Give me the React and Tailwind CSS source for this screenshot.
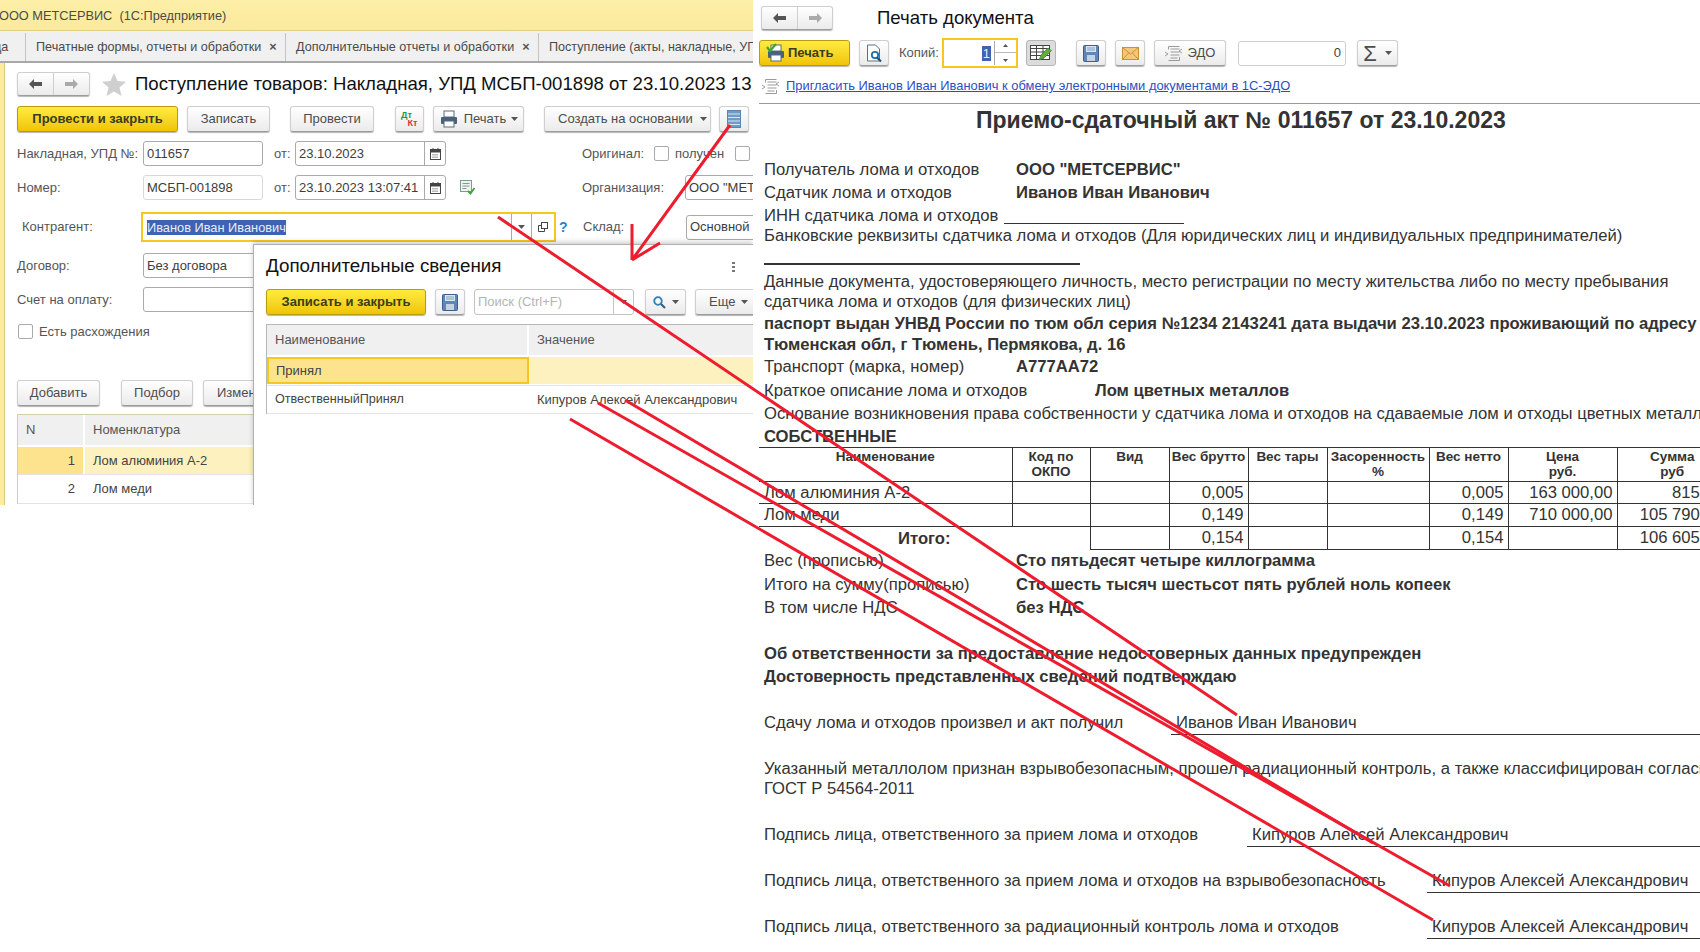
import React from "react";

const btn = "flex items-center justify-center h-[26px] rounded-[3px] border border-[#cfcfcf] border-b-[#9c9c9c] bg-linear-to-b from-white to-[#ebebeb] shadow-[0_1px_1px_#b5b5b5] text-[#4d4d4d] text-[13px] shrink-0 whitespace-nowrap";
const yellow = "flex items-center justify-center h-[26px] rounded-[3px] border border-[#b89b10] bg-linear-to-b from-[#ffec3d] to-[#f0c400] shadow-[0_1px_1px_#b5b5b5] text-[#3c3c1e] text-[13px] font-bold shrink-0 whitespace-nowrap";
const field = "flex items-center h-[25px] rounded-[3px] border border-[#aaa] bg-white text-[#3d3d3d] text-[13px] pl-[3px] shrink-0 whitespace-nowrap overflow-hidden";
const label = "text-[#555] text-[13px] whitespace-nowrap shrink-0";

const Caret = () => (
  <svg width="7" height="4" viewBox="0 0 7 4" className="shrink-0"><path d="M0 0h7L3.500 4z" fill="#555" /></svg>
);
const Back = ({ c = "#555" }) => (
  <svg width="15" height="12" viewBox="0 0 15 12"><path d="M1 6l5-5v3h8v4H6v3z" fill={c} /></svg>
);
const Fwd = ({ c = "#aaa" }) => (
  <svg width="15" height="12" viewBox="0 0 15 12"><path d="M14 6L9 1v3H1v4h8v3z" fill={c} /></svg>
);
const Calendar = () => (
  <svg width="11" height="12" viewBox="0 0 11 12">
    <rect x="0.500" y="1.500" width="10" height="10" fill="#fff" stroke="#444" />
    <rect x="0.500" y="1.500" width="10" height="3" fill="#444" />
    <path d="M3 0v3M8 0v3" stroke="#444" />
    <path d="M2.500 6.500h6M2.500 8h6M2.500 9.500h6" stroke="#777" strokeDasharray="1 1" />
  </svg>
);
const Printer = ({ check }) => (
  <svg width="20" height="20" viewBox="0 0 20 20">
    <rect x="5" y="2" width="10" height="6" fill="#fff" stroke="#5a6b80" />
    <rect x="2" y="8" width="16" height="7" rx="1" fill="#48617d" />
    <rect x="5" y="12" width="10" height="6" fill="#fff" stroke="#5a6b80" />
    {check && <path d="M1 4l3 4 6-7" fill="none" stroke="#3aa53a" strokeWidth="2.200" />}
  </svg>
);
const Floppy = () => (
  <svg width="16" height="17" viewBox="0 0 16 17">
    <rect x="0.500" y="0.500" width="15" height="16" rx="1" fill="#5f86b4" stroke="#3f5f88" />
    <rect x="3" y="1" width="10" height="6" fill="#d9e5f1" />
    <rect x="4" y="10" width="8" height="6" fill="#c3d3e4" />
    <path d="M4 3h8M4 5h8" stroke="#7f9fc3" />
  </svg>
);
const Mail = () => (
  <svg width="17" height="13" viewBox="0 0 17 13">
    <rect x="0.500" y="0.500" width="16" height="12" fill="#f6c779" stroke="#c89236" />
    <path d="M1 1l7.500 6L16 1M1 12l5.500-6M16 12l-5.500-6" fill="none" stroke="#c89236" />
  </svg>
);
const EdoIcon = () => (
  <svg width="17" height="15" viewBox="0 0 17 15" fill="none" stroke="#9a9a9a">
    <path d="M3.500 0.500h11M3.500 0.500v3M14.500 11v3.500h-11" />
    <path d="M5.500 3h9M5.500 6h9M5.500 9h9M5.500 12h7" />
    <path d="M0 6l3 2-3 2M17 3l-3 2 3 2" />
  </svg>
);
const Search = () => (
  <svg width="13" height="13" viewBox="0 0 13 13" fill="none">
    <circle cx="5" cy="5" r="3.800" stroke="#2f7fb8" strokeWidth="1.800" />
    <path d="M8 8l4 4" stroke="#2f5f88" strokeWidth="2.200" />
  </svg>
);
const DocList = () => (
  <svg width="14" height="18" viewBox="0 0 14 18">
    <rect x="0.500" y="0.500" width="13" height="17" fill="#6f9bc4" stroke="#5a86ae" />
    <path d="M1 4h12M1 7.500h12M1 11h12M1 14.500h12" stroke="#d8e6f2" />
  </svg>
);
const Preview = () => (
  <svg width="17" height="19" viewBox="0 0 17 19" fill="none">
    <path d="M1.500 1h8l4 4v12h-12z" fill="#fff" stroke="#5a7088" />
    <circle cx="9" cy="11" r="3.200" stroke="#1f6fa8" strokeWidth="1.800" />
    <path d="M11 13.500l4 4" stroke="#1f4f78" strokeWidth="2.200" />
  </svg>
);
const TableEdit = () => (
  <svg width="22" height="16" viewBox="0 0 22 16" fill="none">
    <rect x="0.500" y="0.500" width="19" height="14" fill="#fff" stroke="#444" />
    <path d="M0.500 3.500h19M0.500 7h19M0.500 10.500h19M6.500 0.500v14M13 0.500v14" stroke="#444" />
    <path d="M9 15l2-5 7-7 3.500 2.500-7 7z" fill="#5fae3e" stroke="#3f7f28" strokeWidth="0.700" />
  </svg>
);
const Note = () => (
  <svg width="15" height="15" viewBox="0 0 15 15" fill="none">
    <rect x="0.500" y="0.500" width="11" height="11" fill="#eef3f0" stroke="#7f9a8e" />
    <path d="M2.500 3.500h7M2.500 6h7M2.500 8.500h4" stroke="#7f9a8e" />
    <path d="M8 11l2.500 2.500L14.500 8" stroke="#3aa53a" strokeWidth="1.800" />
  </svg>
);

const LeftPanel = () => (
  <div className="relative w-[753px] h-[505px] shrink-0 overflow-hidden flex flex-col bg-white">
    <div className="h-[31px] pt-[2px] shrink-0 flex items-center bg-linear-to-b from-[#fdefa8] to-[#fcea9b] border-b border-[#e0cf80] -ml-[1px] text-[#4a4a4a] text-[12.750px] whitespace-pre">
      ООО МЕТСЕРВИС  (1С:Предприятие)
    </div>
    <div className="h-[32px] pt-[2px] shrink-0 flex items-center bg-[#f0f0f0] border-b-2 border-[#a8a8a8] text-[12.600px] text-[#4a4a4a] whitespace-nowrap overflow-hidden">
      <div className="w-[26px] h-full flex items-center pl-0 border-r border-[#c4c4c4] shrink-0"><span className="-ml-[6px]">да</span></div>
      <div className="w-[260px] h-full flex items-center pl-[10px] border-r border-[#c4c4c4] shrink-0">
        Печатные формы, отчеты и обработки<span className="ml-[8px] font-bold text-[#555]">×</span>
      </div>
      <div className="w-[253px] h-full flex items-center pl-[10px] border-r border-[#c4c4c4] shrink-0">
        Дополнительные отчеты и обработки<span className="ml-[8px] font-bold text-[#555]">×</span>
      </div>
      <div className="pl-[10px] shrink-0">Поступление (акты, накладные, УПД)</div>
    </div>
    <div className="flex-1 flex min-h-0">
      <div className="w-[5px] shrink-0 bg-[#fdeca0] border-r border-[#dccb80]" />
      <div className="flex-1 min-w-0 pl-[12px]">
        <div className="flex items-center mt-[9px] h-[24px]">
          <div className="flex w-[73px] h-[24px] rounded-[3px] border border-[#cfcfcf] border-b-[#9c9c9c] bg-linear-to-b from-white to-[#ebebeb] shadow-[0_1px_1px_#b5b5b5] shrink-0">
            <div className="w-[36px] flex items-center justify-center border-r border-[#cfcfcf]"><Back /></div>
            <div className="flex-1 flex items-center justify-center"><Fwd /></div>
          </div>
          <svg width="24" height="23" viewBox="0 0 24 23" className="ml-[12px] shrink-0"><path d="M12 0l3.500 8 8.500.8-6.500 5.700 2 8.500L12 18.500 4.500 23l2-8.500L0 8.800 8.500 8z" fill="#cfcfcf" /></svg>
          <div className="ml-[9px] text-[18.600px] text-[#111] whitespace-nowrap">Поступление товаров: Накладная, УПД МСБП-001898 от 23.10.2023 13:07:41</div>
        </div>
        <div className="flex items-center mt-[10px] h-[26px]">
          <div className={`${yellow} w-[161px]`}>Провести и закрыть</div>
          <div className={`${btn} w-[83px] ml-[9px]`}>Записать</div>
          <div className={`${btn} w-[84px] ml-[20px]`}>Провести</div>
          <div className={`${btn} w-[29px] ml-[21px] flex-col leading-[8px]`}>
            <span className="text-[9px] font-bold text-[#1b9a3c] -ml-[6px]">Дт</span>
            <span className="text-[9px] font-bold text-[#d8323a] ml-[6px]">Кт</span>
          </div>
          <div className={`${btn} w-[91px] ml-[9px] gap-[5px]`}><Printer />Печать<Caret /></div>
          <div className={`${btn} w-[167px] ml-[20px] gap-[7px] justify-start pl-[13px]`}>Создать на основании<Caret /></div>
          <div className={`${btn} w-[30px] ml-[8px]`}><DocList /></div>
        </div>
        <div className="flex items-center mt-[9px] h-[25px]">
          <div className={`${label} w-[126px]`}>Накладная, УПД №:</div>
          <div className={`${field} w-[120px]`}>011657</div>
          <div className={`${label} w-[32px] pl-[11px]`}>от:</div>
          <div className={`${field} w-[151px] justify-between pr-0`}>23.10.2023<div className="w-[21px] h-full flex items-center justify-center border-l border-[#aaa]"><Calendar /></div></div>
          <div className="w-[136px] shrink-0" />
          <div className={`${label} w-[72px]`}>Оригинал:</div>
          <div className="w-[15px] h-[15px] rounded-[2px] border border-[#aaa] shrink-0" />
          <div className={`${label} w-[66px] pl-[6px]`}>получен</div>
          <div className="w-[15px] h-[15px] rounded-[2px] border border-[#aaa] shrink-0" />
        </div>
        <div className="flex items-center mt-[9px] h-[25px]">
          <div className={`${label} w-[126px]`}>Номер:</div>
          <div className={`${field} w-[120px] border-[#d8d8d8]`}>МСБП-001898</div>
          <div className={`${label} w-[32px] pl-[11px]`}>от:</div>
          <div className={`${field} w-[151px] justify-between pr-0`}>23.10.2023 13:07:41<div className="w-[21px] h-full flex items-center justify-center border-l border-[#aaa]"><Calendar /></div></div>
          <div className="w-[136px] shrink-0 pl-[14px]"><Note /></div>
          <div className={`${label} w-[103px]`}>Организация:</div>
          <div className={`${field} w-[80px]`}>ООО "МЕТСЕРВИС"</div>
        </div>
        <div className="flex items-center mt-[12px] h-[30px]">
          <div className={`${label} w-[124px] pl-[5px]`}>Контрагент:</div>
          <div className="w-[415px] h-[30px] flex items-center border-2 border-[#f7c71f] bg-white pl-[4px] shrink-0">
            <span className="bg-[#3f62b3] text-[#e6ecff] text-[12.800px] leading-[15px] whitespace-nowrap">Иванов Иван Иванович</span>
            <div className="ml-auto w-[20px] h-full flex items-center justify-center border-l border-[#aaa]"><Caret /></div>
            <div className="w-[23px] h-full flex items-center justify-center border-l border-[#aaa]">
              <svg width="10" height="10" viewBox="0 0 10 10" fill="none" stroke="#444"><rect x="3.500" y="0.500" width="6" height="6" /><path d="M3 3.500H0.500v6h6V7" /></svg>
            </div>
          </div>
          <div className="w-[27px] pl-[3px] text-[#2b82c9] text-[14px] font-bold shrink-0">?</div>
          <div className={`${label} w-[103px]`}>Склад:</div>
          <div className={`${field} w-[80px] h-[24px]`}>Основной склад</div>
        </div>
        <div className="flex items-center mt-[11px] h-[25px]">
          <div className={`${label} w-[126px]`}>Договор:</div>
          <div className={`${field} w-[200px]`}>Без договора</div>
        </div>
        <div className="flex items-center mt-[9px] h-[25px]">
          <div className={`${label} w-[126px]`}>Счет на оплату:</div>
          <div className={`${field} w-[200px]`} />
        </div>
        <div className="flex items-center mt-[12px] h-[15px] pl-[1px]">
          <div className="w-[15px] h-[15px] rounded-[2px] border border-[#aaa] shrink-0" />
          <div className={`${label} ml-[6px]`}>Есть расхождения</div>
        </div>
        <div className="flex items-center mt-[41px] h-[26px]">
          <div className={`${btn} w-[83px]`}>Добавить</div>
          <div className={`${btn} w-[72px] ml-[21px]`}>Подбор</div>
          <div className={`${btn} w-[90px] ml-[10px] justify-start pl-[13px]`}>Изменить</div>
        </div>
        <div className="mt-[8px] w-[400px] border-t border-l border-[#d5cfae]">
          <div className="flex h-[32px] bg-[#f0f0f0] border-b-2 border-white text-[13px] text-[#555]">
            <div className="w-[67px] pl-[8px] flex items-center border-r-2 border-white">N</div>
            <div className="flex-1 pl-[8px] flex items-center">Номенклатура</div>
          </div>
          <div className="flex h-[28px] text-[13px] text-[#444] border-b border-[#e4e4e4]">
            <div className="w-[67px] pr-[8px] flex items-center justify-end bg-[#fde38e] border-r-2 border-white">1</div>
            <div className="flex-1 pl-[8px] flex items-center bg-[#fdf1c0]">Лом алюминия А-2</div>
          </div>
          <div className="flex h-[29px] text-[13px] text-[#444] border-b border-[#e4e4e4]">
            <div className="w-[67px] pr-[8px] flex items-center justify-end border-r-2 border-white">2</div>
            <div className="flex-1 pl-[8px] flex items-center">Лом меди</div>
          </div>
        </div>
      </div>
    </div>

    <div className="absolute left-[253px] top-[244px] w-[500px] h-[261px] bg-white border-t border-l border-[#b0b0b0] shadow-[0_-2px_5px_rgba(0,0,0,0.2)] pl-[12px]">
      <div className="flex items-center h-[42px] text-[18.800px] text-[#111] whitespace-nowrap">
        Дополнительные сведения
        <div className="absolute left-[478px] top-[17px] flex flex-col gap-[2px]">
          <div className="w-[3px] h-[2px] bg-[#777]" /><div className="w-[3px] h-[2px] bg-[#777]" /><div className="w-[3px] h-[2px] bg-[#777]" />
        </div>
      </div>
      <div className="flex items-center h-[26px] mt-[2px]">
        <div className={`${yellow} w-[160px]`}>Записать и закрыть</div>
        <div className={`${btn} w-[30px] ml-[9px]`}><Floppy /></div>
        <div className="w-[160px] h-[26px] ml-[9px] flex items-center pl-[3px] rounded-[3px] border border-[#c4c4c4] text-[13px] text-[#b4b4b4] whitespace-nowrap shrink-0">
          Поиск (Ctrl+F)
          <div className="ml-auto w-[20px] h-full flex items-center justify-center border-l border-[#c4c4c4]"><Caret /></div>
        </div>
        <div className={`${btn} w-[41px] ml-[11px] gap-[6px]`}><Search /><Caret /></div>
        <div className={`${btn} w-[70px] ml-[9px] justify-start pl-[13px] gap-[6px]`}>Еще<Caret /></div>
      </div>
      <div className="mt-[9px] border-t border-l border-[#b8b8b8]">
        <div className="flex h-[30px] bg-[#f0f0f0] text-[13px] text-[#555]">
          <div className="w-[262px] pl-[8px] flex items-center border-r-2 border-white">Наименование</div>
          <div className="flex-1 pl-[8px] flex items-center">Значение</div>
        </div>
        <div className="flex h-[27px] mt-[2px] text-[13px] text-[#444]">
          <div className="w-[262px] pl-[7px] flex items-center bg-[#fde38e] border-2 border-[#f7c71f]">Принял</div>
          <div className="flex-1 bg-[#fdf1c0]" />
        </div>
        <div className="flex h-[29px] mt-[1px] text-[13px] text-[#444] border-y border-[#e4e4e4] whitespace-nowrap">
          <div className="w-[262px] pl-[8px] flex items-center text-[12.600px]">ОтвественныйПринял</div>
          <div className="flex-1 pl-[8px] flex items-center">Кипуров Алексей Александрович</div>
        </div>
      </div>
    </div>
  </div>
);

const DocRow = ({ className, children }) => (
  <div className={`flex items-center whitespace-nowrap ${className}`}>{children}</div>
);

const sigL = "pb-[2px] leading-[20px]";
const sigV = "flex-1 border-b border-[#333] pl-[5px] pb-[1px] leading-[20px]";

const RightPanel = () => (
  <div className="ml-[6px] w-[941px] shrink-0 overflow-hidden text-[16.650px] text-[#333]">
    <div className="flex items-center h-[24px] mt-[6px] pl-[2px]">
      <div className="flex w-[72px] h-[24px] rounded-[3px] border border-[#cfcfcf] border-b-[#9c9c9c] bg-linear-to-b from-white to-[#ebebeb] shadow-[0_1px_1px_#b5b5b5] shrink-0">
        <div className="w-[36px] flex items-center justify-center border-r border-[#cfcfcf]"><Back /></div>
        <div className="flex-1 flex items-center justify-center"><Fwd /></div>
      </div>
      <div className="ml-[44px] text-[18.600px] text-[#111] whitespace-nowrap">Печать документа</div>
    </div>
    <div className="flex items-center h-[30px] mt-[8px]">
      <div className={`${yellow} w-[91px] justify-start pl-[6px] gap-[2px]`}><Printer check />Печать</div>
      <div className={`${btn} w-[30px] ml-[9px]`}><Preview /></div>
      <div className={`${label} ml-[10px] w-[43px]`}>Копий:</div>
      <div className="w-[76px] h-[30px] border-2 border-[#f7c71f] flex items-center justify-end shrink-0">
        <span className="bg-[#3f62b3] text-[#e6ecff] text-[13px] leading-[15px] px-[1px]">1</span>
        <div className="w-[22px] h-[24px] ml-[3px] border-l border-[#aaa] flex flex-col items-center justify-around">
          <svg width="5" height="3" viewBox="0 0 5 3"><path d="M0 3h5L2.500 0z" fill="#555" /></svg>
          <div className="w-full h-[1px] bg-[#bbb]" />
          <svg width="5" height="3" viewBox="0 0 5 3"><path d="M0 0h5L2.500 3z" fill="#555" /></svg>
        </div>
      </div>
      <div className="w-[30px] h-[26px] ml-[8px] flex items-center justify-center rounded-[3px] border border-[#b5b5b5] bg-[#dcdcdc] shrink-0"><TableEdit /></div>
      <div className={`${btn} w-[30px] ml-[20px]`}><Floppy /></div>
      <div className={`${btn} w-[30px] ml-[9px]`}><Mail /></div>
      <div className={`${btn} w-[72px] ml-[9px] gap-[6px]`}><EdoIcon />ЭДО</div>
      <div className="w-[108px] h-[25px] ml-[12px] flex items-center justify-end pr-[4px] rounded-[3px] border border-[#d0d0d0] text-[13px] text-[#444] shrink-0">0</div>
      <div className={`${btn} w-[41px] ml-[11px] gap-[8px] text-[22px]`}>Σ<Caret /></div>
    </div>
    <div className="flex items-center h-[16px] mt-[10px] pl-[3px]">
      <EdoIcon />
      <a className="ml-[7px] text-[12.900px] text-[#2a4fc4] underline whitespace-nowrap">Пригласить Иванов Иван Иванович к обмену электронными документами в 1С-ЭДО</a>
    </div>
    <div className="h-[1px] bg-[#9a9a9a] mt-[9px]" />
    <div className="h-[33px] ml-[217px] flex items-center text-[23px] font-bold whitespace-nowrap">Приемо-сдаточный акт № 011657 от 23.10.2023</div>
    <div className="pl-[5px] mt-[22px]">
      <DocRow className="h-[23px]"><span className="w-[252px]">Получатель лома и отходов</span><b>ООО "МЕТСЕРВИС"</b></DocRow>
      <DocRow className="h-[23px]"><span className="w-[252px]">Сдатчик лома и отходов</span><b>Иванов Иван Иванович</b></DocRow>
      <DocRow className="h-[22px]">ИНН сдатчика лома и отходов<span className="ml-[6px] w-[180px] h-[15px] border-b border-[#333]" /></DocRow>
      <DocRow className="h-[19px]">Банковские реквизиты сдатчика лома и отходов (Для юридических лиц и индивидуальных предпринимателей)</DocRow>
      <div className="h-[22px] flex items-end pb-[3px]"><div className="w-[316px] h-[2px] bg-[#333]" /></div>
      <DocRow className="h-[25px] pt-[4px]">Данные документа, удостоверяющего личность, место регистрации по месту жительства либо по месту пребывания</DocRow>
      <DocRow className="h-[18px]">сдатчика лома и отходов (для физических лиц)</DocRow>
      <DocRow className="h-[24px] pt-[2px]"><b>паспорт выдан УНВД России по тюм обл серия №1234 2143241 дата выдачи 23.10.2023 проживающий по адресу</b></DocRow>
      <DocRow className="h-[18px] pt-[2px]"><b>Тюменская обл, г Тюмень, Пермякова, д. 16</b></DocRow>
      <DocRow className="h-[27px] pt-[2px]"><span className="w-[252px]">Транспорт (марка, номер)</span><b>А777АА72</b></DocRow>
      <DocRow className="h-[21px] pt-[2px]"><span className="w-[331px]">Краткое описание лома и отходов</span><b>Лом цветных металлов</b></DocRow>
      <DocRow className="h-[24px] pt-[2px]">Основание возникновения права собственности у сдатчика лома и отходов на сдаваемые лом и отходы цветных металлов</DocRow>
      <DocRow className="h-[22px] pt-[2px]"><b>СОБСТВЕННЫЕ</b></DocRow>
    </div>
    <table className="w-[968px] max-w-none table-fixed border-collapse leading-[20px]">
      <colgroup>
        <col className="w-[253px]" /><col className="w-[78px]" /><col className="w-[79px]" /><col className="w-[79px]" />
        <col className="w-[79px]" /><col className="w-[102px]" /><col className="w-[79px]" /><col className="w-[109px]" /><col className="w-[110px]" />
      </colgroup>
      <thead>
        <tr className="h-[34px] align-top text-[13.500px] leading-[15px] font-bold border-t border-b border-[#333] whitespace-nowrap">
          {["Наименование", "Код по ОКПО", "Вид", "Вес брутто", "Вес тары", "Засоренность %", "Вес нетто", "Цена руб.", "Сумма руб"].map((t, i) => (
            <th key={t} className={`font-bold text-center pt-[1px] ${i > 0 ? "border-l border-[#333]" : ""}`}>
              {t === "Код по ОКПО" ? <>Код по<br />ОКПО</> : t === "Засоренность %" ? <>Засоренность<br />%</> : t === "Цена руб." ? <>Цена<br />руб.</> : t === "Сумма руб" ? <>Сумма<br />руб</> : t}
            </th>
          ))}
        </tr>
      </thead>
      <tbody>
        {[
          ["Лом алюминия А-2", "0,005", "0,005", "163 000,00", "815,00"],
          ["Лом меди", "0,149", "0,149", "710 000,00", "105 790,00"],
        ].map((r, i) => (
          <tr key={r[0]} className={`border-b border-[#333] ${i === 0 ? "h-[22px]" : "h-[23px]"}`}>
            <td className="pl-[5px] p-0 whitespace-nowrap">{r[0]}</td>
            <td className="border-l border-[#333]" /><td className="border-l border-[#333]" />
            <td className="border-l border-[#333] text-right pr-[4px]">{r[1]}</td>
            <td className="border-l border-[#333]" /><td className="border-l border-[#333]" />
            <td className="border-l border-[#333] text-right pr-[4px]">{r[2]}</td>
            <td className="border-l border-[#333] text-right pr-[4px] whitespace-nowrap">{r[3]}</td>
            <td className="border-l border-[#333] text-right pr-[4px] whitespace-nowrap">{r[4]}</td>
          </tr>
        ))}
        <tr className="h-[23px]">
          <td colSpan={2} className="text-center font-bold pt-[1px]">Итого:</td>
          <td className="border-l border-b border-[#333]" />
          <td className="border-l border-b border-[#333] text-right pr-[4px]">0,154</td>
          <td className="border-l border-b border-[#333]" /><td className="border-l border-b border-[#333]" />
          <td className="border-l border-b border-[#333] text-right pr-[4px]">0,154</td>
          <td className="border-l border-b border-[#333]" />
          <td className="border-l border-b border-[#333] text-right pr-[4px] whitespace-nowrap">106 605,00</td>
        </tr>
      </tbody>
    </table>
    <div className="pl-[5px]">
      <DocRow className="h-[23px]"><span className="w-[252px]">Вес (прописью)</span><b>Сто пятьдесят четыре киллограмма</b></DocRow>
      <DocRow className="h-[24px]"><span className="w-[252px]">Итого на сумму(прописью)</span><b>Сто шесть тысяч шестьсот пять рублей ноль копеек</b></DocRow>
      <DocRow className="h-[22px]"><span className="w-[252px]">В том числе НДС</span><b>без НДС</b></DocRow>
      <div className="h-[24px]" />
      <DocRow className="h-[23px]"><b>Об ответственности за предоставление недостоверных данных предупрежден</b></DocRow>
      <DocRow className="h-[23px]"><b>Достоверность представленных сведений подтверждаю</b></DocRow>
      <div className="h-[24px]" />
      <div className="flex items-end h-[22px] whitespace-nowrap">
        <span className={`w-[407px] ${sigL}`}>Сдачу лома и отходов произвел и акт получил</span>
        <span className={sigV}>Иванов Иван Иванович</span>
      </div>
      <div className="h-[24px]" />
      <DocRow className="h-[20px]">Указанный металлолом признан взрывобезопасным, прошел радиационный контроль, а также классифицирован согласно</DocRow>
      <DocRow className="h-[21px]">ГОСТ Р 54564-2011</DocRow>
      <div className="h-[25px]" />
      <div className="flex items-end h-[22px] whitespace-nowrap">
        <span className={`w-[483px] ${sigL}`}>Подпись лица, ответственного за прием лома и отходов</span>
        <span className={sigV}>Кипуров Алексей Александрович</span>
      </div>
      <div className="h-[24px]" />
      <div className="flex items-end h-[22px] whitespace-nowrap">
        <span className={`w-[663px] ${sigL}`}>Подпись лица, ответственного за прием лома и отходов на взрывобезопасность</span>
        <span className={sigV}>Кипуров Алексей Александрович</span>
      </div>
      <div className="h-[24px]" />
      <div className="flex items-end h-[22px] whitespace-nowrap">
        <span className={`w-[663px] ${sigL}`}>Подпись лица, ответственного за радиационный контроль лома и отходов</span>
        <span className={sigV}>Кипуров Алексей Александрович</span>
      </div>
    </div>
  </div>
);

export default function App() {
  return (
    <div className="relative flex items-start w-[1700px] h-[952px] overflow-hidden bg-white font-['Liberation_Sans',Arial,sans-serif]">
      <LeftPanel />
      <RightPanel />
      <svg width="1700" height="952" className="absolute left-0 top-0 pointer-events-none" fill="none" stroke="#ed1c2e" strokeWidth="3">
        <path d="M730 125L632 260M632 224V260M660 243L632 260" />
        <path d="M498 217L1237 715" />
        <path d="M625 400L1373 843" />
        <path d="M598 403L1450 886" />
        <path d="M570 419L1433 920" />
      </svg>
    </div>
  );
}
